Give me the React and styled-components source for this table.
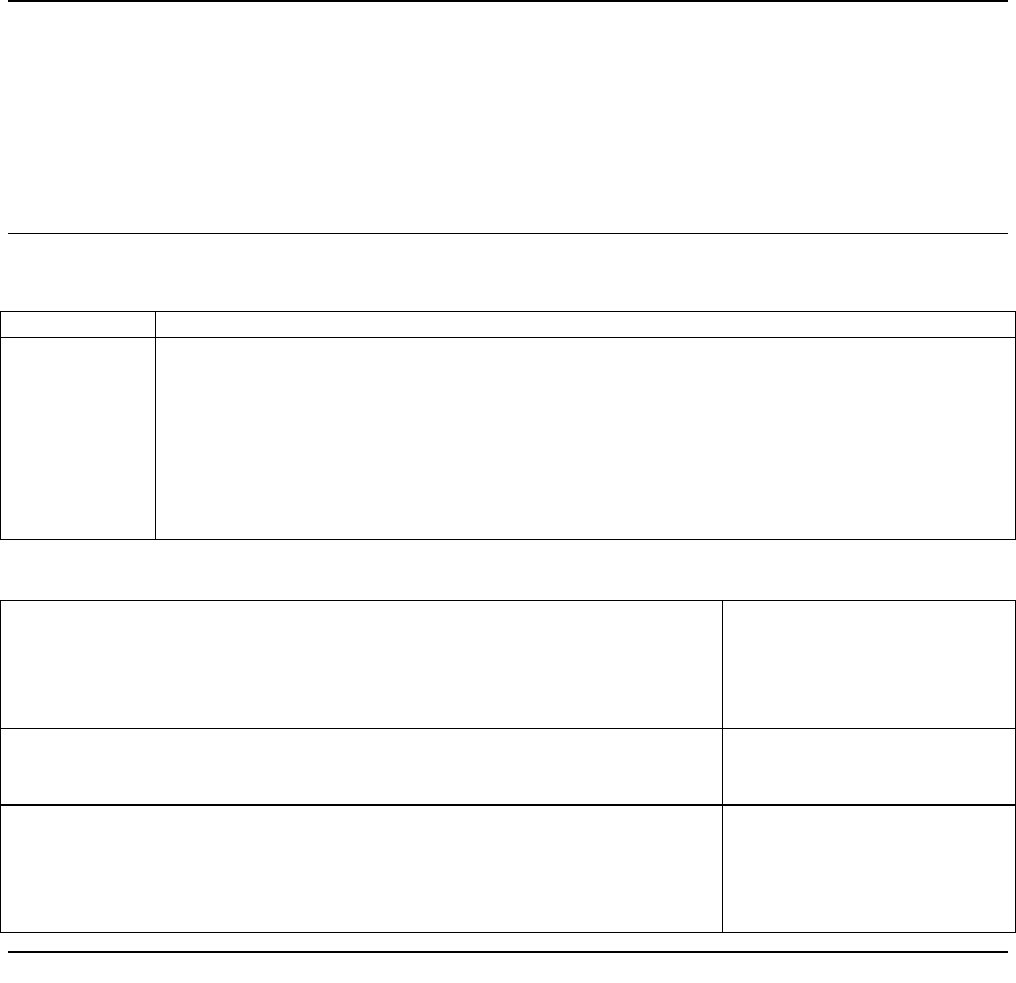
import React from 'react';
import styled, { createGlobalStyle } from 'styled-components';

const GlobalStyle = createGlobalStyle`
    html, body {
        margin: 0;
        padding: 0;
        background: #ffffff;
        font-family: "Liberation Serif", "Times New Roman", serif;
    }
`;

const Page = styled.div`
    width: 1016px;
    min-height: 983px;
    background: #ffffff;
`;

const HeaderBand = styled.div`
    margin: 0 8px;
    height: 231px;
    border-top: 2px solid #000;
    border-bottom: 1px solid #000;
`;

const Grid = styled.div`
    display: grid;
    grid-template-columns: ${props => props.cols};
    grid-template-rows: ${props => props.rows};
    margin-top: ${props => props.gap || 0}px;
    border-left: 1px solid #000;
    border-top: 1px solid #000;
    width: 1016px;
    box-sizing: border-box;
`;

const Cell = styled.div`
    box-sizing: border-box;
    border-right: 1px solid #000;
    border-bottom: 1px solid #000;
    font-size: 14px;
`;

const FooterRule = styled.div`
    margin: 18px 8px 0;
    height: 2px;
    background: #000;
`;

const App = () => {
    return (
        <Page>
            <GlobalStyle />
            <HeaderBand />

            <Grid cols="155px 860px" rows="26px 202px" gap={77}>
                <Cell />
                <Cell />
                <Cell />
                <Cell />
            </Grid>

            <Grid cols="722px 293px" rows="128px 76px" gap={60}>
                <Cell />
                <Cell />
                <Cell />
                <Cell />
            </Grid>

            <Grid cols="722px 293px" rows="127px">
                <Cell />
                <Cell />
            </Grid>

            <FooterRule />
        </Page>
    );
};

export default App;
